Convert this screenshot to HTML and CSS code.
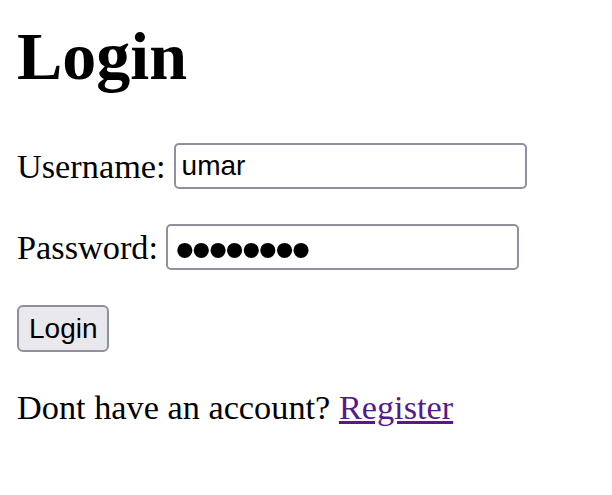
FILE: index.html
```html
<!DOCTYPE html>
<html lang="en">
<head>
<meta charset="utf-8">
<title>Login</title>
<link rel="stylesheet" href="styles.css">
</head>
<body>
<main class="page">
  <h1 class="title">Login</h1>
  <form class="form" action="#" onsubmit="return false;">
    <div class="field">
      <label class="label" for="username">Username:</label>
      <input class="input" id="username" type="text" value="umar">
    </div>
    <div class="field">
      <label class="label" for="password">Password:</label>
      <input class="input input-password" id="password" type="password" value="12345678">
    </div>
    <button class="button" type="submit">Login</button>
  </form>
  <p class="note">Dont have an account? <a class="link" href="#">Register</a></p>
</main>
</body>
</html>
```

FILE: styles.css
```css
html, body {
  margin: 0;
  background: #ffffff;
}

body {
  padding: 17px;
  font-family: "Liberation Serif", "Times New Roman", serif;
  font-size: 34.3px;
  color: #000000;
}

.page {
  display: flex;
  flex-direction: column;
  align-items: flex-start;
}

.title {
  margin: 0 0 48px;
  font-size: 68px;
  font-weight: bold;
  line-height: 78px;
}

.form {
  display: flex;
  flex-direction: column;
  align-items: flex-start;
  gap: 35px;
}

.field {
  display: flex;
  align-items: center;
  gap: 8px;
}

.label {
  line-height: 39px;
}

.input {
  box-sizing: border-box;
  width: 353px;
  height: 46px;
  margin: 0;
  padding: 0 6px;
  border: 2px solid #8f8f9d;
  border-radius: 5px;
  background: #ffffff;
  font-family: "Liberation Sans", Arial, sans-serif;
  font-size: 28px;
  color: #000000;
  outline: none;
}

.input-password {
  padding: 4px 6px 0 7px;
  font-size: 56px;
  letter-spacing: -3px;
}

.button {
  box-sizing: border-box;
  width: 92px;
  height: 47px;
  margin: 0;
  padding: 0 10px;
  border: 2px solid #8f8f9d;
  border-radius: 6px;
  background: #e9e9ed;
  font-family: "Liberation Sans", Arial, sans-serif;
  font-size: 28px;
  color: #000000;
}

.note {
  margin: 36px 0 0;
  line-height: 39px;
}

.link {
  color: #551a8b;
}
```
